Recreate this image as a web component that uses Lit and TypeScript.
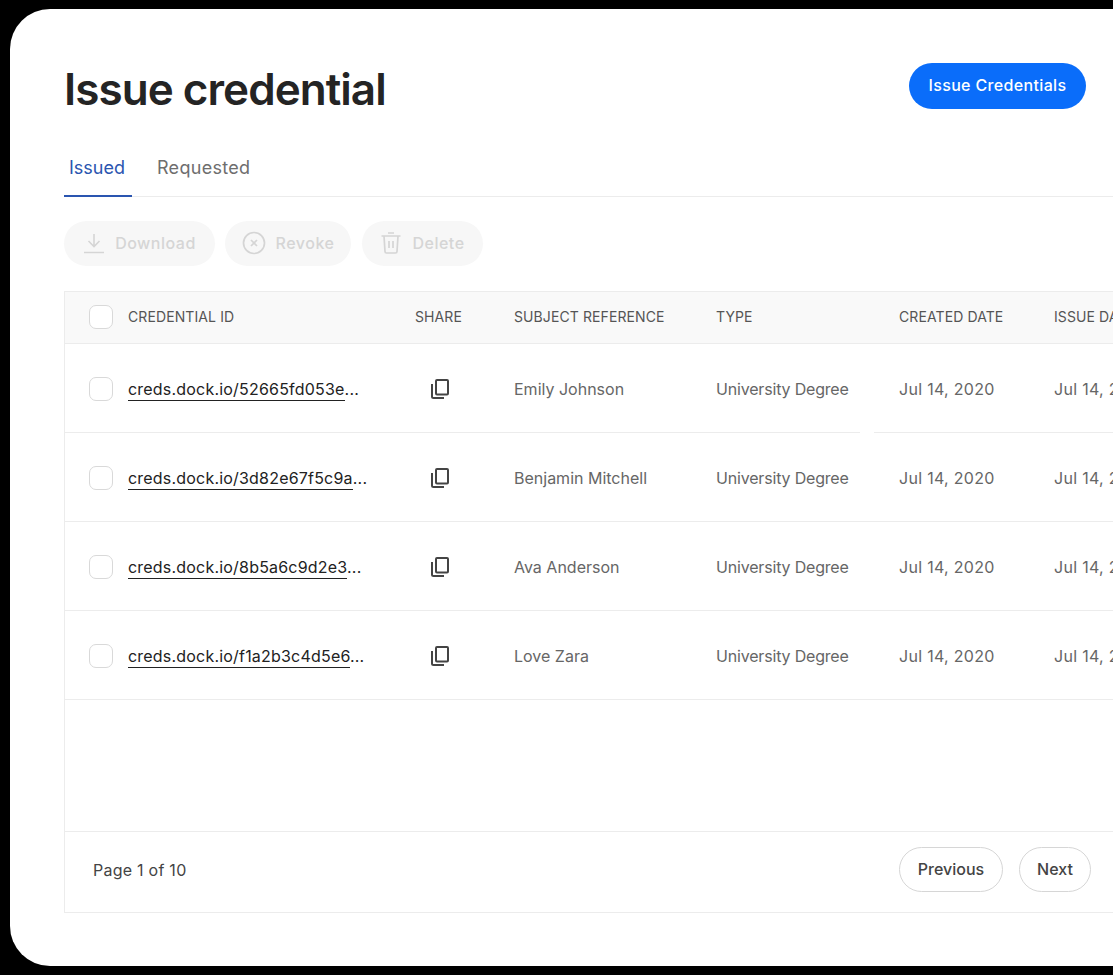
import { css, html, LitElement } from "lit";
import { customElement } from "lit/decorators.js";

const rows = [
    { id: "creds.dock.io/52665fd053e", subject: "Emily Johnson" },
    { id: "creds.dock.io/3d82e67f5c9a", subject: "Benjamin Mitchell" },
    { id: "creds.dock.io/8b5a6c9d2e3", subject: "Ava Anderson" },
    { id: "creds.dock.io/f1a2b3c4d5e6", subject: "Love Zara" },
];

const copyIcon = html`<svg class="copy" viewBox="0 0 20 22" width="20" height="22" fill="none" stroke="currentColor" stroke-width="2">
  <rect x="6" y="2" width="12" height="14.5" rx="1"></rect>
  <path d="M2 6v12.5a1.5 1.5 0 0 0 1.5 1.5H14"></path>
</svg>`;

@customElement("app-root")
export class AppRoot extends LitElement {
    render() {
        return html`
      <div class="card">
        <header>
          <h1>Issue credential</h1>
          <button class="primary">Issue Credentials</button>
        </header>

        <nav class="tabs">
          <a class="tab active">Issued</a>
          <a class="tab">Requested</a>
        </nav>

        <div class="actions">
          <button class="ghost download">
            <svg viewBox="0 0 22 22" width="22" height="22" fill="none" stroke="currentColor" stroke-width="1.6">
              <path d="M11 2v12M5.5 9l5.5 5.5L16.5 9M1 20.5h20"></path>
            </svg>
            Download
          </button>
          <button class="ghost revoke">
            <svg viewBox="0 0 24 24" width="24" height="24" fill="none" stroke="currentColor" stroke-width="1.7">
              <circle cx="12" cy="12" r="10.5"></circle>
              <path d="M9 9l6 6M15 9l-6 6"></path>
            </svg>
            Revoke
          </button>
          <button class="ghost delete">
            <svg viewBox="0 0 22 24" width="22" height="24" fill="none" stroke="currentColor" stroke-width="1.7">
              <path d="M1.5 5h19M8 2h6M4 5l1 15.5a1.5 1.5 0 0 0 1.5 1.5h9a1.5 1.5 0 0 0 1.5-1.5L18 5M9 10v7M13 10v7"></path>
            </svg>
            Delete
          </button>
        </div>

        <section class="table">
          <div class="row head">
            <span class="check"></span>
            <span>CREDENTIAL ID</span>
            <span>SHARE</span>
            <span>SUBJECT REFERENCE</span>
            <span>TYPE</span>
            <span>CREATED DATE</span>
            <span>ISSUE DATE</span>
          </div>
          ${rows.map(
            (r) => html`
              <div class="row body">
                <span class="check"></span>
                <span class="link"><u>${r.id}</u>...</span>
                <span class="share">${copyIcon}</span>
                <span>${r.subject}</span>
                <span class="type">University Degree</span>
                <span class="date">Jul 14, 2020</span>
                <span class="date">Jul 14, 2020</span>
              </div>
            `
          )}
          <div class="spacer"></div>
          <footer>
            <span class="page">Page 1 of 10</span>
            <div class="pager">
              <button class="outline">Previous</button>
              <button class="outline">Next</button>
            </div>
          </footer>
        </section>
      </div>
    `;
    }

    static styles = css`
      :host {
        display: block;
        width: 1113px;
        height: 975px;
        overflow: hidden;
        background: #000;
        font-family: "Inter", "Liberation Sans", sans-serif;
        color: #444;
      }

      .card {
        box-sizing: border-box;
        width: 1240px;
        height: 957px;
        margin: 9px 0 0 10px;
        padding: 54px 0 0 54px;
        background: #fff;
        border-radius: 40px;
      }

      button {
        font: inherit;
        border: 0;
        padding: 0;
        white-space: nowrap;
      }

      header {
        width: 1022px;
        height: 52px;
        display: flex;
        align-items: center;
        justify-content: space-between;
      }

      h1 {
        margin: 0;
        font-size: 44px;
        font-weight: 600;
        letter-spacing: -0.95px;
        color: #242424;
      }

      .primary {
        align-self: flex-start;
        width: 177px;
        height: 46px;
        padding-bottom: 2px;
        border-radius: 23px;
        background: #0a6dfa;
        color: #fff;
        font-size: 16px;
        font-weight: 500;
        letter-spacing: 0.35px;
      }

      .tabs {
        width: 1056px;
        height: 52px;
        margin-top: 30px;
        display: flex;
        border-bottom: 1px solid #ececec;
        box-sizing: border-box;
      }

      .tab {
        box-sizing: content-box;
        height: 50px;
        padding: 0 5px;
        line-height: 46px;
        font-size: 18px;
        letter-spacing: 0.3px;
        color: #6e6e6e;
      }

      .tab.active {
        color: #2a55b0;
        border-bottom: 2px solid #2a55b0;
        margin-right: 20px;
        padding-right: 7px;
        letter-spacing: 0;
      }

      .actions {
        display: flex;
        gap: 10px;
        margin-top: 24px;
      }

      .ghost {
        box-sizing: border-box;
        height: 45px;
        padding-bottom: 2px;
        display: flex;
        align-items: center;
        justify-content: center;
        gap: 10px;
        border-radius: 23px;
        background: #f7f7f7;
        color: #d5d5d5;
        font-size: 16px;
        font-weight: 500;
        letter-spacing: 0.5px;
      }

      .download {
        width: 151px;
      }

      .revoke {
        width: 126px;
      }

      .delete {
        width: 121px;
        margin-left: 1px;
      }

      .table {
        box-sizing: border-box;
        width: 1056px;
        height: 622px;
        margin-top: 25px;
        border: 1px solid #ececec;
        display: flex;
        flex-direction: column;
      }

      .row {
        position: relative;
        display: grid;
        grid-template-columns: 39px 287px 99px 202px 183px 155px 1fr;
        align-items: center;
        padding-left: 24px;
        border-bottom: 1px solid #ececec;
        white-space: nowrap;
      }

      .head {
        height: 52px;
        box-sizing: border-box;
        background: #f9f9f9;
        font-size: 14px;
        letter-spacing: 0.1px;
        color: #555;
      }

      .head span {
        margin-bottom: 3px;
      }

      .head .check {
        margin-bottom: 1px;
      }

      .body {
        height: 89px;
        box-sizing: border-box;
        padding-top: 1px;
        font-size: 16px;
        color: #666;
      }

      /* small break in the first row's divider */
      .head + .body::after {
        content: "";
        position: absolute;
        left: 795px;
        bottom: -1px;
        width: 14px;
        height: 1px;
        background: #fff;
      }

      .check {
        box-sizing: border-box;
        width: 24px;
        height: 24px;
        border: 1px solid #d9d9d9;
        border-radius: 7px;
        background: #fff;
      }

      .link {
        color: #222;
        letter-spacing: 0.2px;
      }

      .link u {
        text-decoration: none;
        border-bottom: 1px solid #222;
        padding-bottom: 1px;
      }

      .type {
        letter-spacing: -0.18px;
      }

      .date {
        letter-spacing: 0.3px;
      }

      .share {
        display: flex;
        padding-left: 15px;
        color: #444;
      }

      .spacer {
        flex: 1;
      }

      footer {
        height: 81px;
        box-sizing: border-box;
        display: flex;
        align-items: center;
        justify-content: space-between;
        padding: 0 28px 5px;
        border-top: 1px solid #ececec;
        font-size: 16px;
        color: #444;
      }

      .page {
        letter-spacing: 0.25px;
      }

      .pager {
        display: flex;
        gap: 16px;
      }

      .outline {
        box-sizing: border-box;
        height: 45px;
        width: 104px;
        padding-bottom: 2px;
        border: 1px solid #d6d6d6;
        border-radius: 23px;
        background: #fff;
        color: #444;
        font-size: 16px;
        font-weight: 500;
      }

      .outline:last-child {
        width: 72px;
      }
    `;
}
